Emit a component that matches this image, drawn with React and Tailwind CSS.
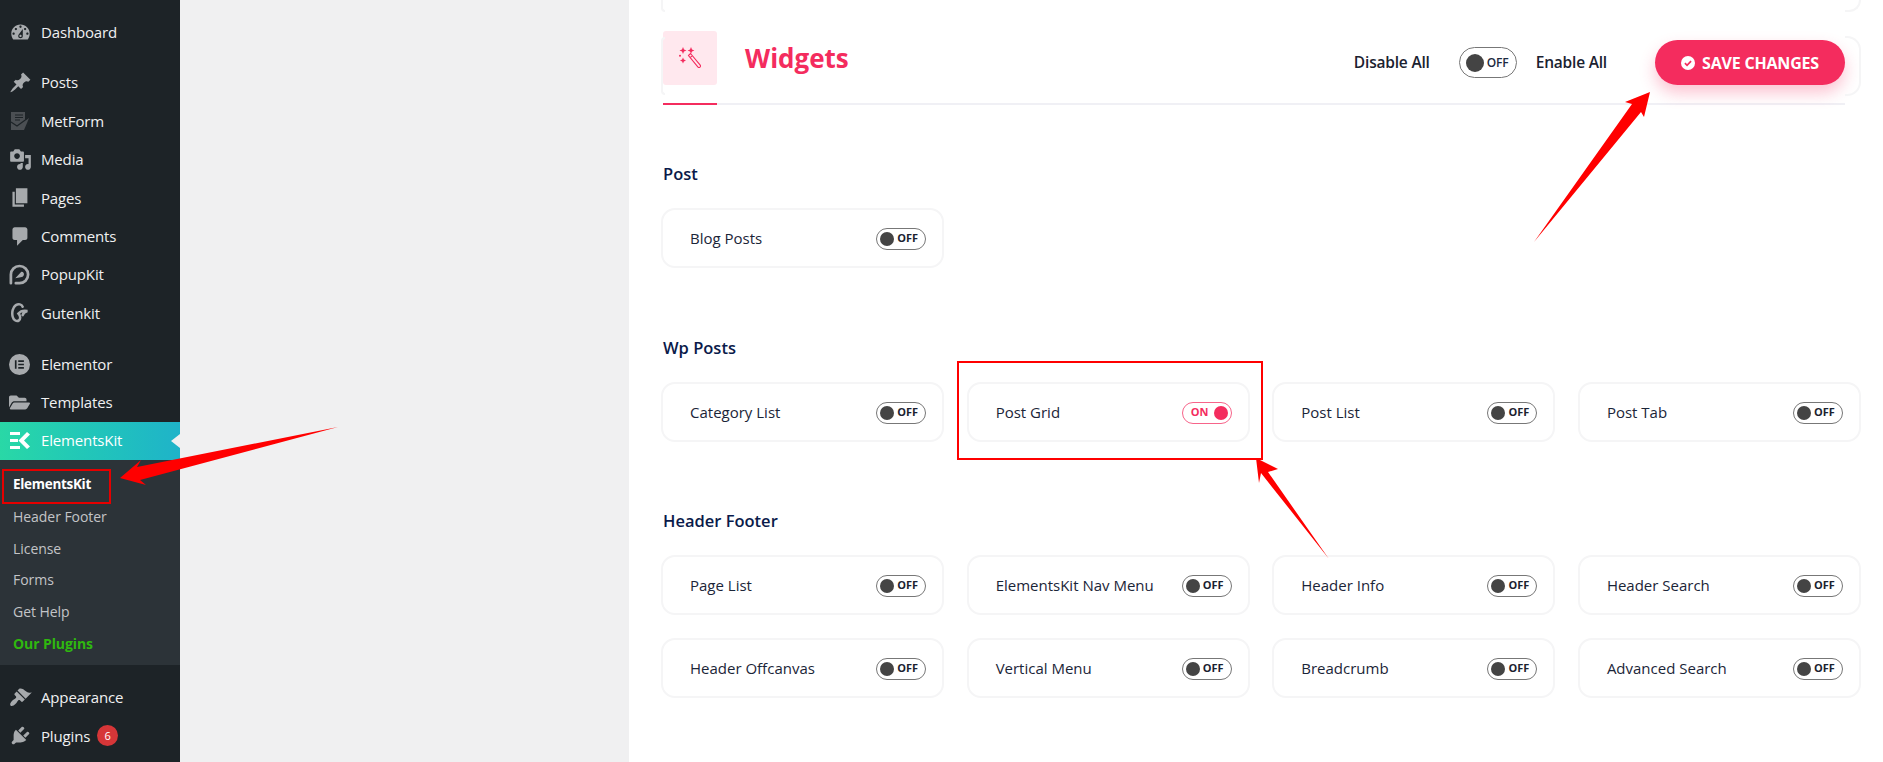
import React from 'react';
import { FaFolderOpen } from 'react-icons/fa';

const font = { fontFamily: '"Open Sans", "Noto Sans", sans-serif' };

const Dash = ({ d, className = 'w-[23px] h-[23px]' }) => (
  <svg viewBox="0 0 20 20" className={className} fill="currentColor">
    <path fillRule="evenodd" d={d} />
  </svg>
);

const icons = {
  dashboard: <Dash d="M3.76 16h12.48c1.1-1.37 1.76-3.11 1.76-5 0-4.42-3.58-8-8-8s-8 3.58-8 8c0 1.89.66 3.63 1.76 5zM10 4c.55 0 1 .45 1 1s-.45 1-1 1-1-.45-1-1 .45-1 1-1zM6 6c.55 0 1 .45 1 1s-.45 1-1 1-1-.45-1-1 .45-1 1-1zm8 0c.55 0 1 .45 1 1s-.45 1-1 1-1-.45-1-1 .45-1 1-1zm-5.37 5.55L12 7v6c0 1.1-.9 2-2 2s-2-.9-2-2c0-.57.24-1.08.63-1.45zM4 10c.55 0 1 .45 1 1s-.45 1-1 1-1-.45-1-1 .45-1 1-1zm12 0c.55 0 1 .45 1 1s-.45 1-1 1-1-.45-1-1 .45-1 1-1zm-5 3c0-.55-.45-1-1-1s-1 .45-1 1 .45 1 1 1 1-.45 1-1z" />,
  posts: <Dash d="M10.44 3.02l1.82-1.82 6.36 6.35-1.83 1.82c-1.05-.68-2.48-.57-3.41.36l-.75.75c-.92.93-1.04 2.35-.35 3.41l-1.83 1.82-2.41-2.41-2.8 2.79c-.42.42-3.38 2.71-3.8 2.29s1.86-3.39 2.28-3.81l2.79-2.79L4.1 9.36l1.83-1.82c1.05.69 2.48.57 3.4-.36l.75-.75c.93-.92 1.05-2.35.36-3.41z" />,
  metform: (
    <svg viewBox="0 0 20 20" className="w-[20px] h-[20px] ml-[1px]">
      <path fill="#4b4f53" d="M1 1h14v8l4-2-2 5-3 7H1z" />
      <path stroke="#1d2327" strokeWidth="1.2" fill="none" d="M1 11l6 4 11-8M5 4h8M5 6.5h8M5 9h5" />
    </svg>
  ),
  media: <Dash d="M13 11V4c0-.55-.45-1-1-1h-1.67L9 1H5L3.67 3H2c-.55 0-1 .45-1 1v7c0 .55.45 1 1 1h10c.55 0 1-.45 1-1zM7 4.5c1.38 0 2.5 1.12 2.5 2.5S8.38 9.5 7 9.5 4.5 8.38 4.5 7 5.62 4.5 7 4.5zM14 6h5v10.5c0 1.38-1.12 2.5-2.5 2.5S14 17.88 14 16.5s1.12-2.5 2.5-2.5c.17 0 .34.02.5.05V9h-3V6zm-4 8.05V13h2v3.5c0 1.38-1.12 2.5-2.5 2.5S7 17.88 7 16.5 8.12 14 9.5 14c.17 0 .34.02.5.05z" />,
  pages: <Dash d="M6 15V2h10v13H6zm-1 1h8v2H3V5h2v11z" />,
  comments: <Dash d="M5 2h9c1.1 0 2 .9 2 2v7c0 1.1-.9 2-2 2h-2l-5 5v-5H5c-1.1 0-2-.9-2-2V4c0-1.1.9-2 2-2z" />,
  popupkit: (
    <svg viewBox="0 0 20 20" className="w-[21px] h-[21px]" fill="none" stroke="currentColor" strokeWidth="2.6" strokeLinecap="round">
      <path d="M1.8 18.3v-8.2a8.2 8.2 0 1 1 8.2 8.2H6.5" />
      <path fill="currentColor" stroke="none" d="M6 13.5l5.5-6c2-.6 3.3 1.5 2.6 3.2-.6 1.2-1.5 1.8-3 1.8z" />
    </svg>
  ),
  gutenkit: (
    <svg viewBox="0 0 20 20" className="w-[21px] h-[21px]" fill="none" stroke="currentColor" strokeWidth="2.4" strokeLinecap="round">
      <path d="M13 4.5C12 2 9 1.5 6.5 3 3.5 5 2.5 10 3.5 14c.8 3.5 4 5 6 3.5 2-1.7 1-5-.5-6.5 2-2.5 6-3 8.5-2.5-2 .5-4 2-4.5 4" />
    </svg>
  ),
  elementor: (
    <svg viewBox="0 0 20 20" className="w-[21px] h-[21px]" fill="currentColor">
      <path fillRule="evenodd" d="M10 0a10 10 0 1 0 0 20 10 10 0 0 0 0-20zM7.2 6H5.6v8h1.6zm7 0H8.8v1.6h5.4zm0 3.2H8.8v1.6h5.4zm0 3.2H8.8V14h5.4z" />
    </svg>
  ),
  templates: <FaFolderOpen className="w-[21px] h-[19px]" />,
  elementskit: (
    <svg viewBox="0 0 20 17" className="w-5 h-[17px]" fill="#fff">
      <path d="M0 0h10v3H0zM0 7h8v3H0zM0 14h10v3H0zM17 0l3 2.6-6 5.9 6 5.9-3 2.6-8.5-8.5z" />
    </svg>
  ),
  appearance: <Dash d="M14.48 11.06L7.41 3.99l1.5-1.5c.5-.56 2.3-.47 3.51.32 1.21.8 1.43 1.28 2.91 2.1 1.18.64 2.45 1.26 4.45.85zm-.71.71L6.7 4.7 4.93 6.47c-.39.39-.39 1.02 0 1.41l1.06 1.06c.39.39.39 1.03 0 1.42-.6.6-1.43 1.11-2.21 1.69-.35.26-.7.53-1.01.84C1.43 14.23.4 16.08 1.4 17.07c.99 1 2.84-.03 4.18-1.36.31-.31.58-.66.85-1.02.57-.78 1.08-1.61 1.69-2.21.39-.39 1.02-.39 1.41 0l1.06 1.06c.39.39 1.02.39 1.41 0z" />,
  plugins: <Dash d="M13.11 4.36L9.87 7.6 8 5.73l3.24-3.24c.35-.34 1.05-.2 1.56.32.52.51.66 1.21.31 1.55zm-8 1.77l.91-1.12 9.01 9.01-1.19.84c-.71.71-2.63 1.16-3.82 1.16H6.14L4.9 17.26c-.59.59-1.54.59-2.12 0-.59-.58-.59-1.53 0-2.12l1.24-1.24v-3.88c0-1.13.4-3.19 1.09-3.89zm7.26 3.97l3.24-3.24c.34-.35 1.04-.21 1.55.31.52.51.66 1.21.32 1.55l-3.25 3.25z" />,
};

const MenuItem = ({ icon, label, badge }) => (
  <div className="flex items-center h-[38.4px] text-[#f0f0f1]">
    <span className="w-[41px] pl-[9px] text-[#a7aaad] flex items-center">{icons[icon]}</span>
    <span className="text-[15px] tracking-[-0.15px]">{label}</span>
    {badge && (
      <span className="ml-[7px] w-[21px] h-[21px] rounded-full bg-[#d63638] text-white text-[11px] flex items-center justify-center">
        {badge}
      </span>
    )}
  </div>
);

const SubItem = ({ label, className = 'text-[14px] tracking-[-0.05px] text-[#c3c4c7]' }) => (
  <div className={`h-[31.8px] pl-[13px] flex items-center ${className}`}>{label}</div>
);

const Sidebar = () => (
  <aside className="w-[180px] shrink-0 bg-[#1d2327] pt-[13px]">
    <MenuItem icon="dashboard" label="Dashboard" />
    <div className="h-[12px]" />
    <MenuItem icon="posts" label="Posts" />
    <MenuItem icon="metform" label="MetForm" />
    <MenuItem icon="media" label="Media" />
    <MenuItem icon="pages" label="Pages" />
    <MenuItem icon="comments" label="Comments" />
    <MenuItem icon="popupkit" label="PopupKit" />
    <MenuItem icon="gutenkit" label="Gutenkit" />
    <div className="h-[13px]" />
    <MenuItem icon="elementor" label="Elementor" />
    <MenuItem icon="templates" label="Templates" />
    <div className="relative flex items-center h-[38px] -mt-[0.4px] bg-gradient-to-r from-[#29d8a6] to-[#1fb3c9] text-white">
      <span className="w-[41px] pl-[10px] flex items-center">{icons.elementskit}</span>
      <span className="text-[15px] tracking-[-0.15px]">ElementsKit</span>
      <span className="absolute right-0 top-[12px] border-y-[7px] border-y-transparent border-r-[9px] border-r-[#f0f0f1]" />
    </div>
    <div className="bg-[#2c3338] pt-[9px] pb-[6px]">
      <SubItem label="ElementsKit" className="text-white font-bold text-[13.5px] tracking-[-0.3px]" />
      <SubItem label="Header Footer" />
      <SubItem label="License" />
      <SubItem label="Forms" />
      <SubItem label="Get Help" />
      <SubItem label="Our Plugins" className="text-[#2fb80f] font-bold text-[14px] tracking-[-0.1px]" />
    </div>
    <div className="h-[13px]" />
    <MenuItem icon="appearance" label="Appearance" />
    <MenuItem icon="plugins" label="Plugins" badge="6" />
  </aside>
);

const Toggle = ({ on = false, big = false }) => {
  if (on) {
    return (
      <span className="mt-[1px] w-[50px] h-[22px] rounded-full border border-[#f7648a] flex items-center justify-between pl-[8px] pr-[3px] text-[#f42c5e] text-[11px] font-bold shrink-0">
        ON
        <span className="w-[14px] h-[14px] rounded-full bg-[#f42c5e]" />
      </span>
    );
  }
  return (
    <span
      className={
        big
          ? 'w-[58px] h-[31px] rounded-full border border-[#777] flex items-center pl-[6px] gap-[3px] text-[#1d2a3f] text-[12px] font-semibold shrink-0'
          : 'mt-[1px] w-[50px] h-[22px] rounded-full border border-[#777] flex items-center pl-[3px] gap-[3px] text-[#1b2230] text-[11px] font-bold shrink-0'
      }
    >
      <span className={big ? 'w-[18px] h-[18px] rounded-full bg-[#444]' : 'w-[14px] h-[14px] rounded-full bg-[#444]'} />
      OFF
    </span>
  );
};

const Card = ({ label, on }) => (
  <div className="h-[60px] rounded-[14px] border-2 border-[#f5f5f6] pl-[27px] pr-[16px] flex items-center justify-between text-[15px] text-[#1b2538]">
    <span>{label}</span>
    <Toggle on={on} />
  </div>
);

const Section = ({ title, items, className }) => (
  <section className={className}>
    <h3 className="ml-[2px] h-[24px] leading-[26px] text-[16.5px] font-semibold text-[#0a1a4a]">{title}</h3>
    <div className="mt-[23px] grid grid-cols-4 gap-x-[22.5px] gap-y-[23px]">
      {items.map((it) => (
        <Card key={it.label} label={it.label} on={it.on} />
      ))}
    </div>
  </section>
);

const Header = () => (
  <div className="relative mt-[19px] ml-[2px] mr-[16px] h-[74px] flex border-b-2 border-[#f0f0f5]">
    <span className="absolute -left-[2px] top-[6px] w-[4px] h-[58px] border-l-2 border-y-2 border-[#f5f5f6] rounded-l-[10px]" />
    <span className="absolute -right-[16px] top-[5px] w-[16px] h-[60px] border-r-2 border-y-2 border-[#f5f5f6] rounded-r-[14px]" />
    <div className="w-[54px] h-[74px] -mb-[2px] border-b-[2px] border-[#f42c5e] shrink-0">
      <div className="w-[54px] h-[54px] rounded-[3px] bg-[#ffe8ee] flex items-center justify-center">
        <svg viewBox="0 0 22 22" className="w-[22px] h-[22px]" fill="none" stroke="#f42c5e">
          <path strokeWidth="1.1" d="M9.5 8.5l2-2 9.7 11.6c.5.8.3 1.6-.3 2.1-.7.5-1.5.4-2.1-.3zM11.2 10.6l2-1.9" />
          <path fill="#f42c5e" stroke="none" d="M4 0l1 2.5L7.5 3.5 5 4.5 4 7 3 4.5.5 3.5 3 2.5zM12 0l1 2.4 2.4 1-2.4 1-1 2.4-1-2.4-2.4-1 2.4-1zM4 10.5l.9 2.1 2.1.9-2.1.9-.9 2.1-.9-2.1-2.1-.9 2.1-.9z" />
          <circle cx="1" cy="8.7" r="1" fill="#f42c5e" stroke="none" />
        </svg>
      </div>
    </div>
    <h2 className="ml-[28px] h-[54px] leading-[54px] text-[26px] font-bold text-[#f42c5e]">Widgets</h2>
    <div className="ml-auto pt-[9px] flex items-start">
      <div className="h-[45px] flex items-center text-[15.5px] font-semibold tracking-[-0.2px] text-[#1b2230]">
        <span>Disable All</span>
        <span className="ml-[29px]"><Toggle big /></span>
        <span className="ml-[19px]">Enable All</span>
      </div>
      <button className="ml-[48px] w-[190px] h-[45px] rounded-full bg-[#f42c5e] text-white text-[16px] font-bold tracking-[-0.2px] flex items-center justify-center gap-[7px] shadow-[0_8px_16px_rgba(244,44,94,0.28)]">
        <svg viewBox="0 0 16 16" className="w-[14px] h-[14px]">
          <circle cx="8" cy="8" r="8" fill="#fff" />
          <path d="M4.5 8.2l2.4 2.4 4.6-4.8" fill="none" stroke="#f42c5e" strokeWidth="2" />
        </svg>
        SAVE CHANGES
      </button>
    </div>
  </div>
);

// red marks drawn on top of the screenshot
const Annotations = () => (
  <svg className="absolute inset-0 pointer-events-none" width="1883" height="762" viewBox="0 0 1883 762" fill="#ff0000">
    <rect x="3" y="470" width="107" height="33" fill="none" stroke="#e60000" strokeWidth="2" />
    <rect x="958" y="362" width="304" height="97" fill="none" stroke="#ff0000" strokeWidth="2" />
    <polygon points="120,478 141,460 137,467 338,427 140,480 146,485" />
    <polygon points="1650,92 1625,102 1632,104 1534,242 1641,112 1644,117" />
    <polygon points="1256,458 1278,469 1268,472 1329,559 1261,473 1259,483" />
  </svg>
);

export default function App() {
  return (
    <div className="relative flex w-[1883px] h-[762px] overflow-hidden" style={font}>
      <Sidebar />
      <div className="w-[449px] shrink-0 bg-[#f0f0f1]" />
      <main className="flex-1 bg-white pl-[32px] pr-[22px]">
        <div className="h-[12px] flex justify-between">
          <span className="w-[4px] border-l-2 border-b-2 border-[#f5f5f6] rounded-bl-[10px]" />
          <span className="w-[16px] border-r-2 border-b-2 border-[#f5f5f6] rounded-br-[14px]" />
        </div>
        <Header />
        <Section className="mt-[56px]" title="Post" items={[{ label: 'Blog Posts' }]} />
        <Section
          className="mt-[67px]"
          title="Wp Posts"
          items={[{ label: 'Category List' }, { label: 'Post Grid', on: true }, { label: 'Post List' }, { label: 'Post Tab' }]}
        />
        <Section
          className="mt-[66px]"
          title="Header Footer"
          items={[
            { label: 'Page List' },
            { label: 'ElementsKit Nav Menu' },
            { label: 'Header Info' },
            { label: 'Header Search' },
            { label: 'Header Offcanvas' },
            { label: 'Vertical Menu' },
            { label: 'Breadcrumb' },
            { label: 'Advanced Search' },
          ]}
        />
      </main>
      <Annotations />
    </div>
  );
}
